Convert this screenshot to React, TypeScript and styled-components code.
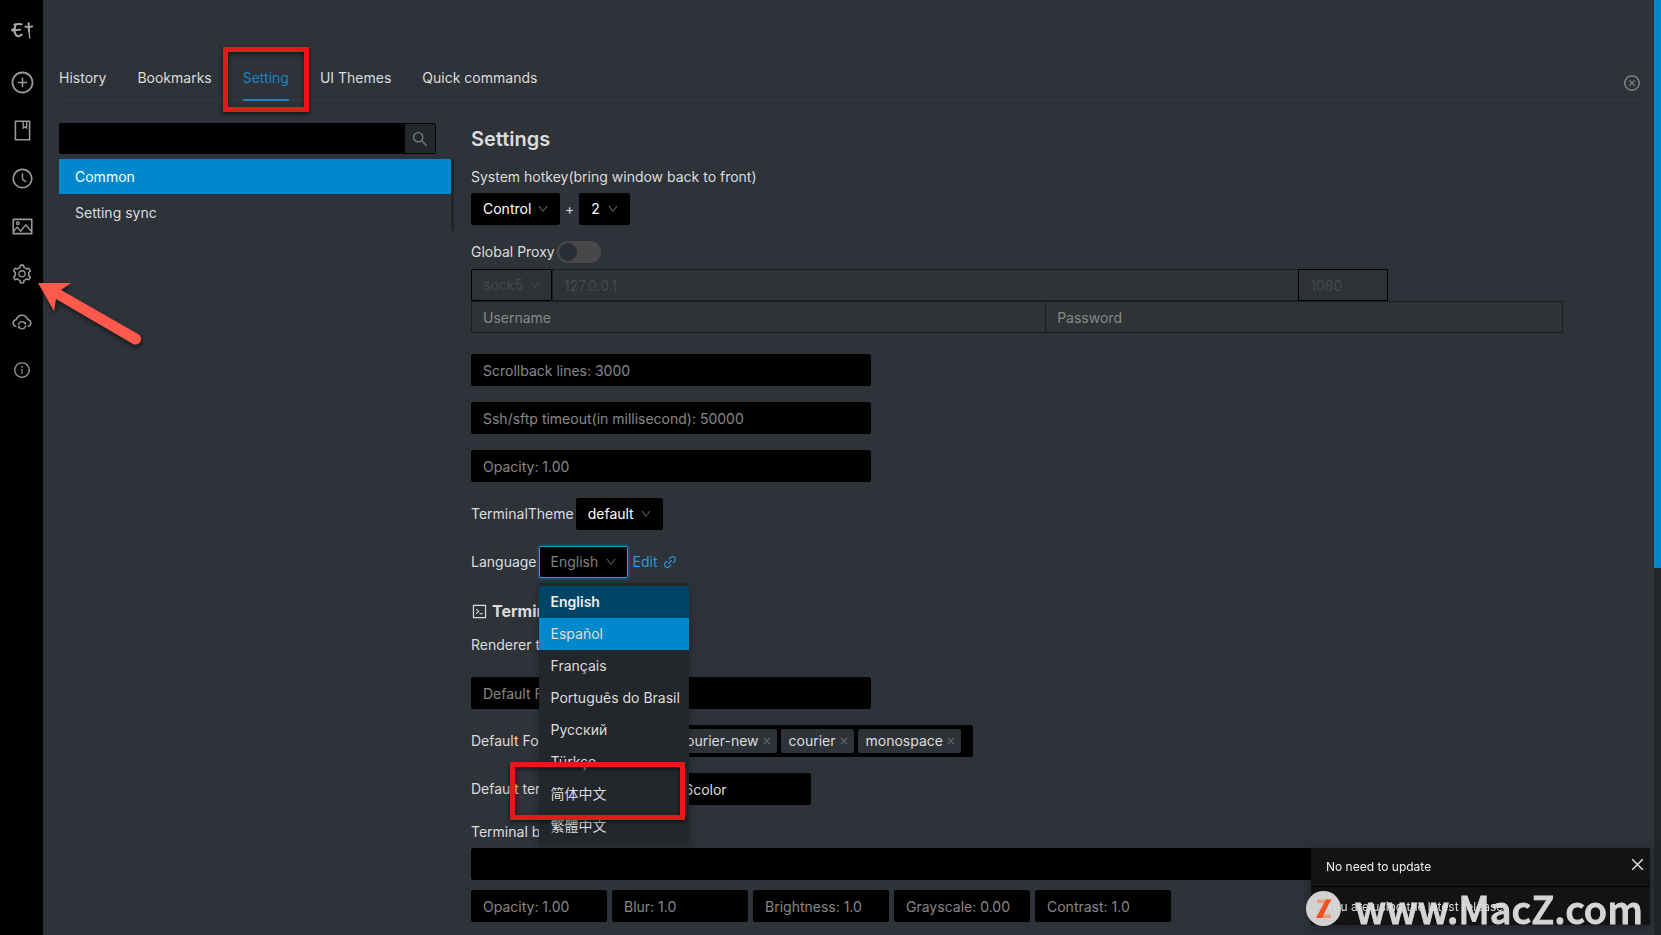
import React from 'react';
import styled, { createGlobalStyle, css } from 'styled-components';
import {
  AiOutlineBook,
  AiOutlineClockCircle,
  AiOutlineClose,
  AiOutlineCloseCircle,
  AiOutlineCloudSync,
  AiOutlineCode,
  AiOutlineDown,
  AiOutlineInfoCircle,
  AiOutlineLink,
  AiOutlinePicture,
  AiOutlinePlusCircle,
  AiOutlineSearch,
  AiOutlineSetting,
} from 'react-icons/ai';

const color = {
  main: '#2e3239',
  field: '#2e3336',
  dark: '#000',
  popup: '#23262b',
  text: '#ddd',
  textDark: '#888',
  disabled: '#45484b',
  primary: '#0088cc',
  danger: '#e21a1a',
};

const GlobalStyle = createGlobalStyle`
  * { box-sizing: border-box; }
  body {
    margin: 0;
    background: ${color.main};
    color: ${color.text};
    font: 14px/22px Inter, "Noto Sans CJK SC", sans-serif;
    overflow: hidden;
  }
  button, input, select { font: inherit; color: inherit; }
  button { background: none; border: 0; padding: 0; cursor: pointer; }
  svg { display: block; flex: none; }
`;

const Layout = styled.div`
  display: flex;
  height: 100vh;
  overflow: hidden;
`;

/* Side bar */

const SideBar = styled.nav`
  position: relative;
  z-index: 2;
  flex: none;
  width: 43px;
  background: ${color.dark};
  color: #999;
`;

const SideButton = styled.button`
  display: flex;
  align-items: center;
  justify-content: center;
  width: 44px;
  height: 48px;
`;

const Logo = styled.div`
  display: flex;
  justify-content: center;
  width: 44px;
  height: 58px;
  padding-top: 22px;
`;

const Arrow = styled.svg`
  position: absolute;
  left: 30px;
  top: 270px;
  filter: drop-shadow(1px 3px 2px rgba(0, 0, 0, 0.5));
`;

/* Main panel */

const Main = styled.main`
  flex: 1;
  min-width: 0;
  padding: 55px 13px 0 16px;
`;

const Header = styled.header`
  display: flex;
  align-items: center;
  justify-content: space-between;
  box-shadow: inset 0 -1px 0 #363a40;
`;

const Tabs = styled.div`
  display: flex;
  gap: 31px;
`;

const Tab = styled.button<{ $active?: boolean }>`
  position: relative;
  padding: 12px 0;
  color: ${(p) => (p.$active ? '#1a83bd' : 'inherit')};
  border-bottom: 2px solid ${(p) => (p.$active ? '#1a83bd' : 'transparent')};
  height: 46px;
  line-height: 22px;
`;

const Highlight = styled.span<{ $inset: string }>`
  position: absolute;
  inset: ${(p) => p.$inset};
  z-index: 3;
  border: 5px solid ${color.danger};
  filter: drop-shadow(0 2px 2px rgba(0, 0, 0, 0.6));
  pointer-events: none;
`;

const CloseButton = styled.button`
  padding-top: 10px;
  color: #888;
`;

const Columns = styled.div`
  display: flex;
  gap: 17px;
  padding-top: 22px;
`;

const ListColumn = styled.aside`
  flex: none;
  width: 395px;
`;

const Search = styled.form`
  display: flex;
  height: 31px;
  margin-right: 18px;
  border: 1px solid ${color.dark};
  border-radius: 2px;
  input {
    flex: 1;
    min-width: 0;
    border: 0;
    background: ${color.dark};
    outline: 0;
  }
  button {
    display: flex;
    align-items: center;
    justify-content: center;
    width: 30px;
    background: ${color.popup};
    color: #777;
  }
`;

const ItemList = styled.div`
  display: flex;
  flex-direction: column;
  gap: 1px;
  margin-top: 5px;
  height: 72px;
  border-right: 3px solid #202328;
`;

const Item = styled.button<{ $active?: boolean }>`
  height: 35px;
  padding: 0 16px;
  text-align: left;
  ${(p) =>
    p.$active &&
    css`
      background: ${color.primary};
      color: #fff;
    `}
`;

/* Settings form */

const Form = styled.form`
  flex: 1;
  min-width: 0;
  padding-right: 78px;
`;

const Title = styled.h2`
  margin: 0 0 11px;
  font-size: 20px;
  line-height: 32px;
  font-weight: 600;
`;

const SubTitle = styled.h3`
  display: flex;
  align-items: center;
  gap: 4px;
  margin: 20px 0 10px;
  font-size: 16px;
  line-height: 26px;
  font-weight: 700;
`;

const Label = styled.label`
  white-space: nowrap;
`;

const BlockLabel = styled(Label)`
  display: block;
  margin-bottom: 5px;
`;

const PlainLine = styled.p`
  margin: 0 0 21px;
`;

const Row = styled.div<{ $gap?: number }>`
  display: flex;
  align-items: center;
  gap: ${(p) => p.$gap ?? 5}px;
  margin-bottom: 16px;
`;

const ProxyRow = styled.div`
  display: flex;
  align-items: center;
  gap: 2px;
  margin-bottom: 6px;
`;

const fieldBox = css`
  height: 32px;
  padding: 0 11px;
  border: 1px solid ${color.dark};
  border-radius: 2px;
  outline: 0;
`;

const TextField = styled.input<{ $width?: string; $bright?: boolean }>`
  ${fieldBox}
  display: block;
  width: ${(p) => p.$width ?? '400px'};
  background: ${color.dark};
  color: ${(p) => (p.$bright ? color.text : color.textDark)};
`;

const Stack = styled.div<{ $gap?: number }>`
  display: flex;
  flex-direction: column;
  gap: ${(p) => p.$gap ?? 16}px;
  margin-bottom: 16px;
`;

const FilterLine = styled.div`
  display: flex;
  gap: 5px;
`;

const ProxyGrid = styled.div`
  margin-bottom: 21px;
`;

const ProxyLine = styled.div<{ $width: string }>`
  display: flex;
  width: ${(p) => p.$width};
`;

const ProxyField = styled.input<{ $grow?: number; $width?: number; $strong?: boolean }>`
  ${fieldBox}
  flex: ${(p) => (p.$grow ? `${p.$grow} 1 0` : 'none')};
  width: ${(p) => (p.$width ? `${p.$width}px` : 'auto')};
  min-width: 0;
  border-color: ${(p) => (p.$strong ? color.dark : '#1b1d20')};
  border-radius: 0;
  background: ${color.field};
  & + & {
    margin-left: -1px;
  }
  &::placeholder {
    color: ${color.textDark};
    opacity: 1;
  }
  &:disabled {
    color: ${color.disabled};
  }
`;

const SelectBox = styled.span<{ $width: number; $state?: 'disabled' | 'open' }>`
  position: relative;
  display: flex;
  align-items: center;
  flex: none;
  width: ${(p) => p.$width}px;
  color: #fff;
  select {
    ${fieldBox}
    appearance: none;
    width: 100%;
    background: ${color.dark};
  }
  > svg {
    position: absolute;
    right: 11px;
    color: #666;
    pointer-events: none;
  }
  ${(p) =>
    p.$state === 'disabled' &&
    css`
      color: ${color.disabled};
      select {
        background: ${color.field};
        opacity: 1;
        color: inherit;
      }
      > svg {
        color: ${color.disabled};
      }
    `}
  ${(p) =>
    p.$state === 'open' &&
    css`
      color: #808080;
      select {
        border-color: #2b9bd3;
        box-shadow: 0 0 0 2px rgba(0, 136, 204, 0.25);
      }
    `}
`;

const Menu = styled.ul`
  position: absolute;
  z-index: 2;
  top: 37px;
  left: 0;
  width: 150px;
  margin: 0;
  padding: 3px 0;
  list-style: none;
  background: ${color.popup};
  color: ${color.text};
  border-radius: 2px;
  box-shadow: 0 3px 8px rgba(0, 0, 0, 0.25);
`;

const Option = styled.li<{ $state?: 'selected' | 'active' }>`
  position: relative;
  height: 32px;
  padding: 5px 0 5px 12px;
  white-space: nowrap;
  ${(p) =>
    p.$state === 'selected' &&
    css`
      background: #004566;
      font-weight: 600;
      color: #eee;
    `}
  ${(p) =>
    p.$state === 'active' &&
    css`
      background: ${color.primary};
    `}
`;

const EditLink = styled.a`
  display: flex;
  align-items: center;
  gap: 4px;
  padding-left: 3px;
  color: #2a9bdb;
  text-decoration: none;
`;

const Switch = styled.input`
  appearance: none;
  width: 44px;
  height: 22px;
  margin: 0;
  padding: 2px;
  border-radius: 11px;
  background: #484848;
  &::before {
    content: '';
    display: block;
    width: 18px;
    height: 18px;
    border-radius: 50%;
    background: #2a2d34;
  }
`;

const FamilyRow = styled(Row)`
  width: 502px;
`;

const TagBox = styled.div`
  flex: 1;
  min-width: 0;
  display: flex;
  align-items: center;
  justify-content: flex-end;
  gap: 4px;
  height: 32px;
  padding-right: 12px;
  border-radius: 2px;
  background: ${color.dark};
`;

const Tag = styled.span`
  display: flex;
  align-items: center;
  flex: none;
  gap: 3px;
  height: 24px;
  padding: 0 5px 0 8px;
  border-radius: 2px;
  background: ${color.main};
  button {
    color: #777;
  }
`;

/* Page scroll bar */

const Track = styled.div`
  flex: none;
  width: 7px;
  background: #22262b;
`;

const Thumb = styled.div`
  height: 60.75%;
  background: ${color.primary};
`;

/* Update notice */

const Notice = styled.section`
  position: fixed;
  right: 11px;
  bottom: 10px;
  z-index: 4;
  width: 339px;
  font-size: 12px;
  background: #141314;
  box-shadow: 0 2px 10px rgba(0, 0, 0, 0.4);
`;

const NoticeHead = styled.div`
  display: flex;
  align-items: flex-start;
  justify-content: space-between;
  height: 38px;
  padding: 8px 4px 0 15px;
  color: #eee;
`;

const NoticeBody = styled.p`
  margin: 0;
  height: 39px;
  padding: 9px 15px;
  border-top: 1px solid ${color.dark};
`;

const Watermark = styled.div`
  position: fixed;
  right: 18px;
  bottom: 8px;
  z-index: 5;
  display: flex;
  align-items: center;
  gap: 14px;
  height: 38px;
  color: #e0e0e0;
  opacity: 0.95;
  font: 500 38px/38px 'Noto Sans CJK SC', sans-serif;
  -webkit-text-stroke: 1px #e0e0e0;
  pointer-events: none;
`;

type PickerProps = {
  id: string;
  label?: string;
  value: string;
  width: number;
  state?: 'disabled' | 'open';
  children?: React.ReactNode;
};

function Picker({ id, label, value, width, state, children }: PickerProps) {
  return (
    <SelectBox $width={width} $state={state}>
      <select id={id} aria-label={label} disabled={state === 'disabled'} defaultValue={value}>
        <option>{value}</option>
      </select>
      <AiOutlineDown size={12} />
      {children}
    </SelectBox>
  );
}

const sideItems = [
  { name: 'New bookmark', icon: <AiOutlinePlusCircle size={25} /> },
  { name: 'Bookmarks', icon: <AiOutlineBook size={23} /> },
  { name: 'History', icon: <AiOutlineClockCircle size={23} /> },
  { name: 'UI Themes', icon: <AiOutlinePicture size={23} /> },
  { name: 'Setting', icon: <AiOutlineSetting size={22} /> },
  { name: 'Setting sync', icon: <AiOutlineCloudSync size={22} /> },
  { name: 'About', icon: <AiOutlineInfoCircle size={18} /> },
];

const tabs = ['History', 'Bookmarks', 'Setting', 'UI Themes', 'Quick commands'];

const languages = [
  'English',
  'Español',
  'Français',
  'Português do Brasil',
  'Русский',
  'Türkçe',
  '简体中文',
  '繁體中文',
];

const numbers = ['Scrollback lines: 3000', 'Ssh/sftp timeout(in millisecond): 50000', 'Opacity: 1.00'];

const filters = ['Opacity: 1.00', 'Blur: 1.0', 'Brightness: 1.0', 'Grayscale: 0.00', 'Contrast: 1.0'];

const fonts = ['courier-new', 'courier', 'monospace'];

export default function App() {
  return (
    <>
      <GlobalStyle />
      <Layout>
        <SideBar>
          <Logo>
            <svg width="22" height="17" viewBox="0 0 66 51" fill="none" stroke="#a8a8a8" strokeLinecap="round">
              <path d="M10 8 Q20 4 32 7" strokeWidth="6" />
              <path d="M14 8 Q7 28 14 38 Q20 47 32 38" strokeWidth="6" />
              <path d="M2 25 L12 19 M4 26 L28 23" strokeWidth="5" />
              <path d="M43 14 Q53 17 63 13" strokeWidth="6" />
              <path d="M53 4 L54 28" strokeWidth="6" />
              <path d="M54 26 L56 48" strokeWidth="4" />
            </svg>
          </Logo>
          {sideItems.map((item) => (
            <SideButton key={item.name} type="button" aria-label={item.name}>
              {item.icon}
            </SideButton>
          ))}
          <Arrow width="120" height="84" viewBox="0 0 120 84" aria-hidden="true">
            <path
              d="M8 13 L41 13 L31 20 L108 64 A5 5 0 0 1 103 74 L26 29 L24 41 Z"
              fill="#ff594b"
            />
          </Arrow>
        </SideBar>

        <Main>
          <Header>
            <Tabs role="tablist">
              {tabs.map((name) => (
                <Tab key={name} type="button" role="tab" $active={name === 'Setting'}>
                  {name}
                  {name === 'Setting' && <Highlight $inset="-8px -20px -13px -20px" />}
                </Tab>
              ))}
            </Tabs>
            <CloseButton type="button" aria-label="Close">
              <AiOutlineCloseCircle size={18} />
            </CloseButton>
          </Header>

          <Columns>
            <ListColumn>
              <Search>
                <input type="search" aria-label="Search settings" />
                <button type="button" aria-label="Search">
                  <AiOutlineSearch size={18} />
                </button>
              </Search>
              <ItemList>
                <Item type="button" $active>
                  Common
                </Item>
                <Item type="button">Setting sync</Item>
              </ItemList>
            </ListColumn>

            <Form>
              <Title>Settings</Title>
              <BlockLabel htmlFor="hotkey-mod">System hotkey(bring window back to front)</BlockLabel>
              <Row>
                <Picker id="hotkey-mod" value="Control" width={89} />
                <span>+</span>
                <Picker id="hotkey-key" label="Hotkey key" value="2" width={51} />
              </Row>

              <ProxyRow>
                <Label htmlFor="proxy">Global Proxy</Label>
                <Switch id="proxy" type="checkbox" role="switch" />
              </ProxyRow>
              <ProxyGrid>
                <ProxyLine $width="84%">
                  <Picker id="proxy-type" label="Proxy type" value="sock5" width={81} state="disabled" />
                  <ProxyField aria-label="Proxy host" $grow={1} defaultValue="127.0.0.1" disabled />
                  <ProxyField aria-label="Proxy port" $width={90} $strong defaultValue="1080" disabled />
                </ProxyLine>
                <ProxyLine $width="100%">
                  <ProxyField aria-label="Username" $grow={577} placeholder="Username" />
                  <ProxyField aria-label="Password" $grow={517} placeholder="Password" />
                </ProxyLine>
              </ProxyGrid>

              <Stack>
                {numbers.map((text) => (
                  <TextField key={text} aria-label={text.split(':')[0]} defaultValue={text} />
                ))}
              </Stack>

              <Row $gap={2}>
                <Label htmlFor="theme">TerminalTheme</Label>
                <Picker id="theme" value="default" width={87} />
              </Row>
              <Row $gap={2}>
                <Label htmlFor="language">Language</Label>
                <Picker id="language" value="English" width={89} state="open">
                  <Menu role="listbox" aria-label="Language">
                    {languages.map((name, i) => (
                      <Option
                        key={name}
                        role="option"
                        aria-selected={i === 0}
                        $state={i === 0 ? 'selected' : i === 1 ? 'active' : undefined}
                      >
                        {name}
                        {name === '简体中文' && <Highlight $inset="-16px 4px -10px -29px" />}
                      </Option>
                    ))}
                  </Menu>
                </Picker>
                <EditLink href="#locales">
                  Edit <AiOutlineLink size={16} />
                </EditLink>
              </Row>

              <SubTitle>
                <AiOutlineCode size={17} /> Terminal
              </SubTitle>
              <PlainLine>Renderer type</PlainLine>
              <Row>
                <TextField aria-label="Default font size" defaultValue="Default Font Size: 16" />
              </Row>
              <FamilyRow>
                <span>Default Font Family</span>
                <TagBox>
                  {fonts.map((name) => (
                    <Tag key={name}>
                      {name}
                      <button type="button" aria-label={`Remove ${name}`}>
                        <AiOutlineClose size={10} />
                      </button>
                    </Tag>
                  ))}
                </TagBox>
              </FamilyRow>
              <Row $gap={2}>
                <Label htmlFor="term-type">Default terminal type</Label>
                <TextField id="term-type" $width="200px" $bright defaultValue="xterm-256color" />
              </Row>
              <BlockLabel htmlFor="term-bg">Terminal background image</BlockLabel>
              <Stack $gap={10}>
                <TextField id="term-bg" $width="100%" />
                <FilterLine>
                  {filters.map((text) => (
                    <TextField
                      key={text}
                      $width="136px"
                      aria-label={`Background ${text.split(':')[0]}`}
                      defaultValue={text}
                    />
                  ))}
                </FilterLine>
              </Stack>
            </Form>
          </Columns>
        </Main>

        <Track>
          <Thumb />
        </Track>
      </Layout>

      <Notice role="status">
        <NoticeHead>
          No need to update
          <button type="button" aria-label="Dismiss">
            <AiOutlineClose size={17} />
          </button>
        </NoticeHead>
        <NoticeBody>You are using the latest release</NoticeBody>
      </Notice>

      <Watermark>
        <svg width="35" height="35" viewBox="0 0 70 70" aria-hidden="true">
          <circle cx="35" cy="35" r="35" fill="#dcdcdc" />
          <path d="M22 17 H50 V24 H22 Z M22 47 H50 V54 H22 Z" fill="#f9a184" />
          <path d="M40 17 H50 L32 54 H20 Z" fill="#ff5320" />
        </svg>
        www.MacZ.com
      </Watermark>
    </>
  );
}
